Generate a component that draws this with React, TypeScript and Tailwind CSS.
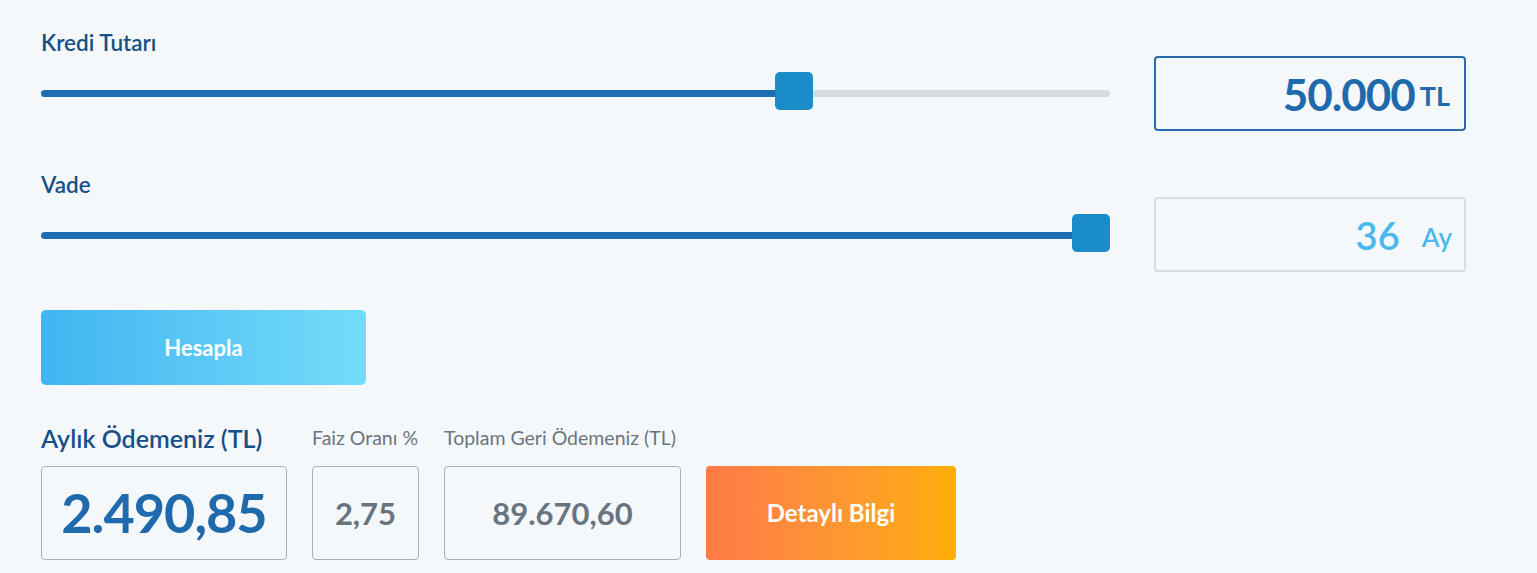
import React from "react";

function Slider({ fill, thumb }: { fill: number; thumb: number }) {
  return (
    <div className="relative h-[38px] w-[1069px] flex items-center">
      <div className="mt-[5px] h-[7px] w-full rounded-full bg-[#d5dbe0] overflow-hidden">
        <div className="h-full bg-[#1f6db1]" style={{ width: fill }} />
      </div>
      <div
        className="absolute top-0 h-[38px] w-[38px] rounded-[5px] bg-[#1a8dc9]"
        style={{ left: thumb }}
      />
    </div>
  );
}

export default function App() {
  return (
    <div
      className="min-h-[573px] w-[1537px] bg-[#f5f8fb] pl-[41px] pt-[30px]"
      style={{ fontFamily: "Lato, 'Liberation Sans', sans-serif" }}
    >
      {/* Row 1 */}
      <div className="flex">
        <div className="w-[1069px]">
          <div className="h-[26px] text-[22.5px] font-semibold leading-[26px] text-[#174f87]">Kredi Tutarı</div>
          <div className="mt-[16px]">
            <Slider fill={755} thumb={734} />
          </div>
        </div>
        <div className="ml-[44px] mt-[26px] flex h-[75px] w-[312px] items-center justify-end rounded-[4px] border-2 border-[#2b6ba9] pr-[14px]">
          <span className="text-[44px] font-bold leading-none tracking-[-1px] text-[#1f6aad]">50.000</span>
          <span className="ml-[5px] mt-[4px] text-[27px] font-bold leading-none text-[#1f6aad]">TL</span>
        </div>
      </div>

      {/* Row 2 */}
      <div className="mt-[41px] flex">
        <div className="w-[1069px]">
          <div className="h-[26px] text-[22.5px] font-semibold leading-[26px] text-[#174f87]">Vade</div>
          <div className="mt-[16px]">
            <Slider fill={1069} thumb={1031} />
          </div>
        </div>
        <div className="ml-[44px] mt-[25px] flex h-[75px] w-[312px] items-center justify-end rounded-[4px] border-2 border-[#d6dde3] pr-[12px]">
          <span className="text-[38px] font-semibold leading-none text-[#4bb8ee]">36</span>
          <span className="ml-[22px] mt-[4px] text-[26px] font-semibold leading-none text-[#4bb8ee]">Ay</span>
        </div>
      </div>

      {/* Hesapla */}
      <button className="mt-[38px] flex h-[75px] w-[325px] items-center justify-center rounded-[5px] bg-gradient-to-r from-[#40b5f0] to-[#74dcfa] text-[22px] font-bold text-white">
        Hesapla
      </button>

      {/* Results */}
      <div className="mt-[37px] flex items-end gap-[25px]">
        <div className="flex w-[246px] flex-col">
          <div className="mb-[12px] whitespace-nowrap text-[25px] font-semibold leading-[32px] text-[#174f87]">Aylık Ödemeniz (TL)</div>
          <div className="flex h-[94px] w-[246px] items-center justify-center rounded-[4px] border border-[#a9b1b8]">
            <span className="text-[54px] font-bold leading-none tracking-[-1px] text-[#1f6aad]">2.490,85</span>
          </div>
        </div>
        <div className="flex w-[107px] flex-col">
          <div className="mb-[16px] whitespace-nowrap text-[19.5px] leading-[24px] text-[#6b757e]">Faiz Oranı %</div>
          <div className="flex h-[94px] w-[107px] items-center justify-center rounded-[4px] border border-[#a9b1b8]">
            <span className="text-[31px] font-bold leading-none text-[#687580]">2,75</span>
          </div>
        </div>
        <div className="flex w-[237px] flex-col">
          <div className="mb-[16px] whitespace-nowrap text-[19.5px] leading-[24px] text-[#6b757e]">Toplam Geri Ödemeniz (TL)</div>
          <div className="flex h-[94px] w-[237px] items-center justify-center rounded-[4px] border border-[#a9b1b8]">
            <span className="text-[31px] font-bold leading-none text-[#687580]">89.670,60</span>
          </div>
        </div>
        <button className="flex h-[94px] w-[250px] items-center justify-center rounded-[4px] bg-gradient-to-r from-[#ff7a46] to-[#ffad00] text-[24px] font-bold text-white">
          Detaylı Bilgi
        </button>
      </div>
    </div>
  );
}
